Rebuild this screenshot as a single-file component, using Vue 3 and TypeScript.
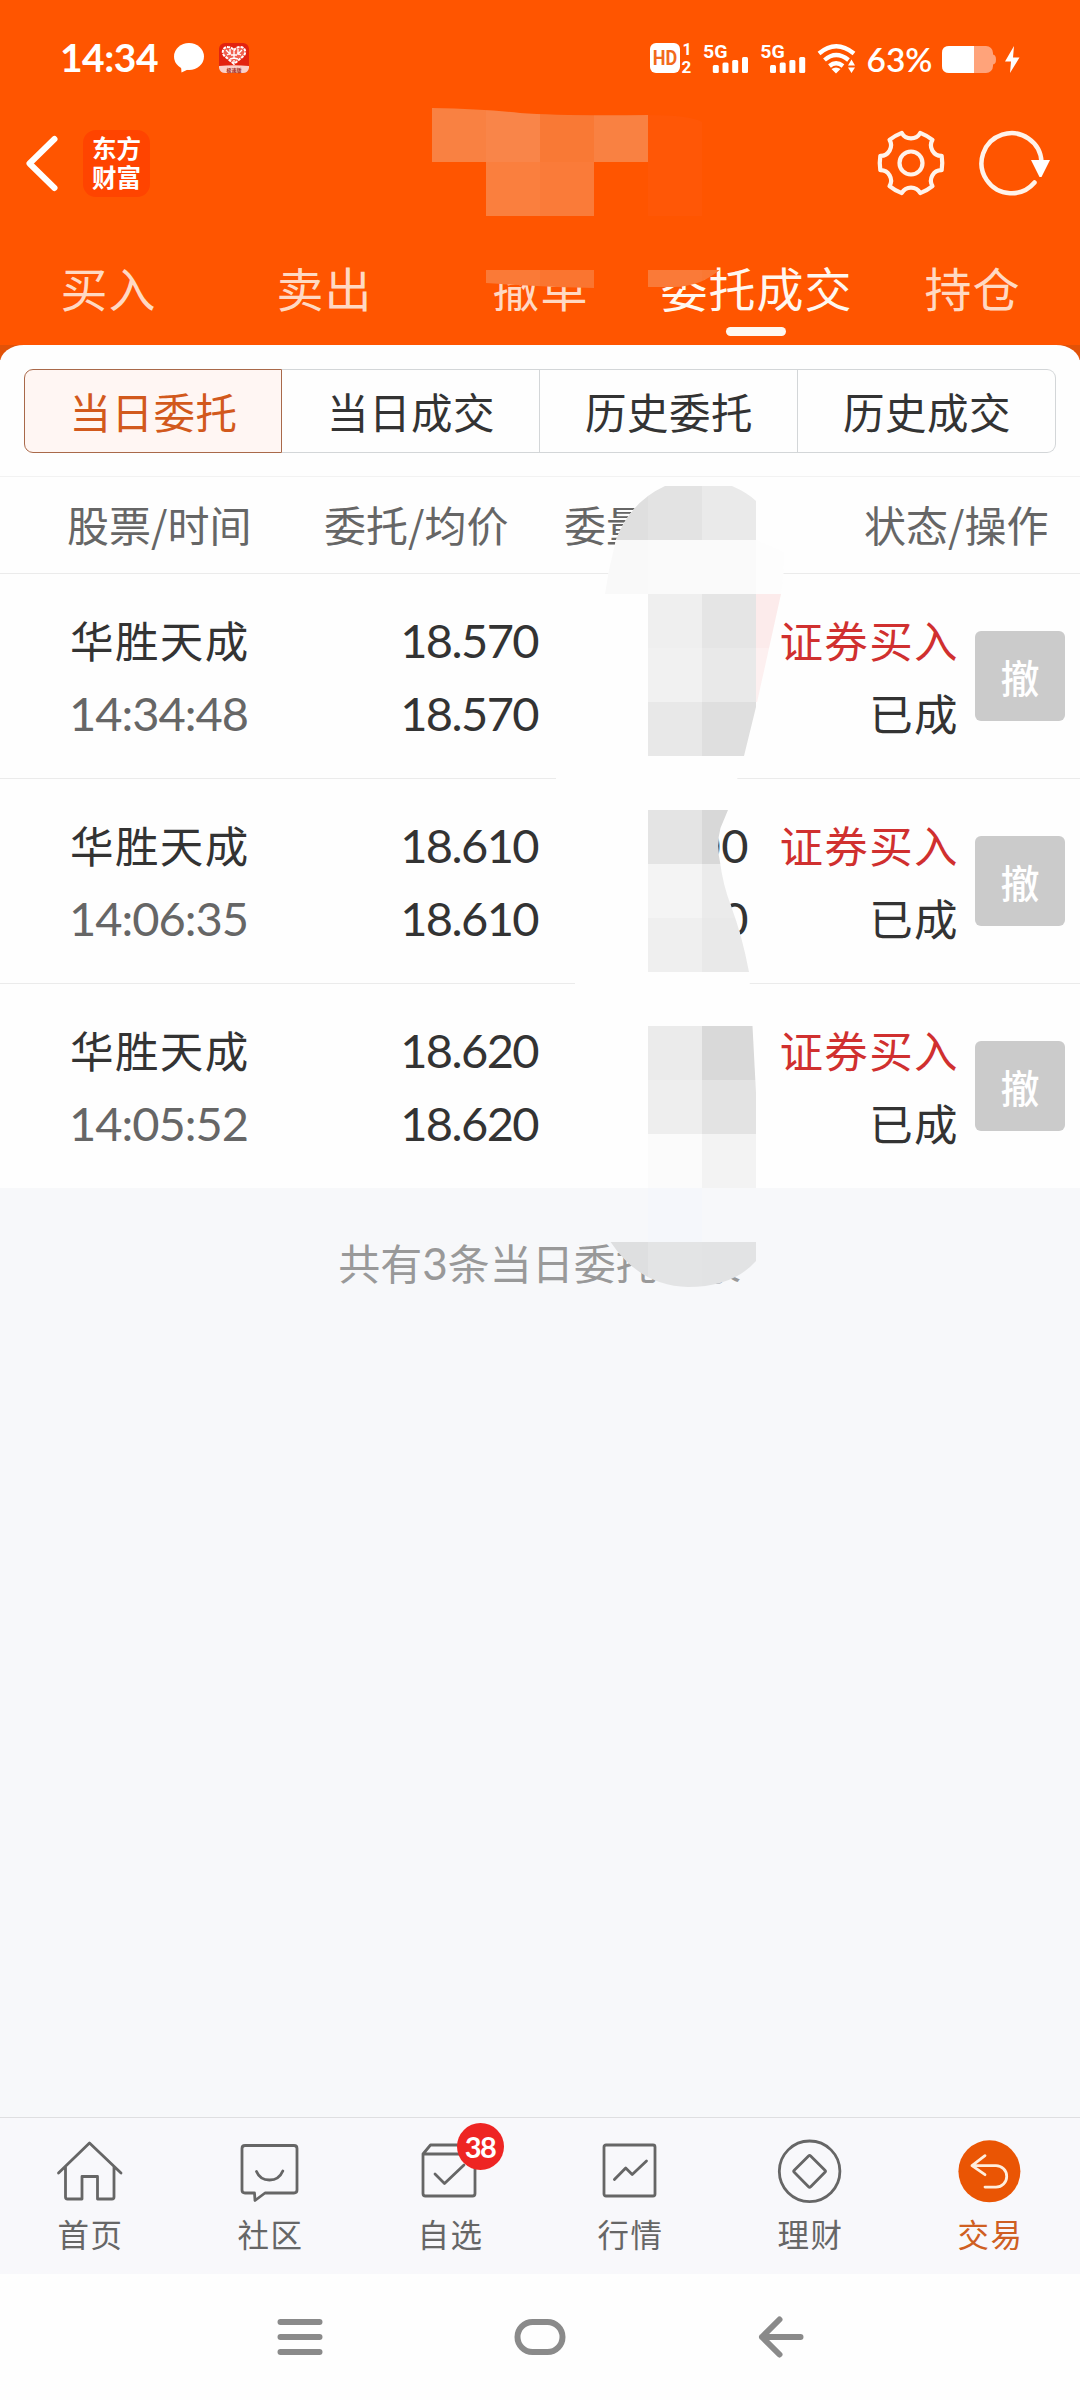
<script setup lang="ts">
interface Order {
  name: string
  time: string
  price: string
  average: string
  quantity: string
  filled: string
}

interface Block {
  x: number
  y: number
  w: number
  h: number
  fill: string
}

const tabs: string[] = ['买入', '卖出', '撤单', '委托成交', '持仓']
const activeTab = 3

const segments: string[] = ['当日委托', '当日成交', '历史委托', '历史成交']
const columns: string[] = ['股票/时间', '委托/均价', '委量/成交', '状态/操作']

const orders: Order[] = [
  { name: '华胜天成', time: '14:34:48', price: '18.570', average: '18.570', quantity: '', filled: '' },
  { name: '华胜天成', time: '14:06:35', price: '18.610', average: '18.610', quantity: '00', filled: '00' },
  { name: '华胜天成', time: '14:05:52', price: '18.620', average: '18.620', quantity: '', filled: '' },
]

// Six-toothed outline for the settings icon
function gearPath(cx: number, cy: number): string {
  const point = (deg: number, r: number): string => {
    const a = (deg * Math.PI) / 180
    return `${(cx + r * Math.cos(a)).toFixed(2)} ${(cy + r * Math.sin(a)).toFixed(2)}`
  }
  let d = `M${point(-13, 31.5)}`
  for (let k = 0; k < 6; k++) {
    const base = k * 60
    d += `Q${point(base, 31.8)} ${point(base + 13, 31.5)}`
    d += `C${point(base + 17, 23.5)} ${point(base + 43, 23.5)} ${point(base + 47, 31.5)}`
  }
  return d + 'Z'
}
const gear = gearPath(35, 35)

const cell = 54
const block = (x: number, y: number, fill: string, w = cell, h = cell): Block => ({ x, y, w, h, fill })

const accountBlocks: Block[] = [
  block(432, 108, '#f98142'),
  block(486, 108, '#f98549'),
  block(540, 108, '#f97935'),
  block(594, 108, '#f98142'),
  block(648, 108, '#ff5706', cell, 108),
  block(486, 162, '#fa7f3e'),
  block(540, 162, '#fa7b39'),
  block(486, 216, '#ff5500', 216),
  block(486, 270, '#fa7a37'),
  block(540, 270, '#fa7530'),
  block(648, 270, '#fa7a38'),
  block(702, 270, '#fa7833'),
]

const quantityBlocks: Block[] = [
  block(594, 486, '#dfdfdf'),
  block(648, 486, '#e3e3e3'),
  block(702, 486, '#eaeaea'),
  block(594, 540, '#f9f9f9'),
  block(648, 540, '#fafafa', 108),
  block(756, 540, '#fdfdfd'),
  block(648, 594, '#efefef'),
  block(702, 594, '#e5e5e5'),
  block(756, 594, '#fcebeb'),
  block(648, 648, '#f1f1f1'),
  block(702, 648, '#e9e9e9'),
  block(756, 648, '#fdf0f0'),
  block(648, 702, '#e8e8e8'),
  block(702, 702, '#dfdfdf'),
  block(648, 810, '#e4e4e4'),
  block(702, 810, '#d8d8d8'),
  block(648, 864, '#f4f4f4'),
  block(702, 864, '#ebebeb'),
  block(648, 918, '#efefef'),
  block(702, 918, '#e9e9e9'),
  block(648, 1026, '#ebebeb'),
  block(702, 1026, '#d9d9d9'),
  block(648, 1080, '#eeeeee'),
  block(702, 1080, '#e3e3e3'),
  block(648, 1134, '#fbfbfb'),
  block(702, 1134, '#f3f3f3'),
  block(540, 1188, '#f7f8fa', 216),
  block(648, 1188, '#f5f7fb'),
  block(594, 1242, '#dedfe0'),
  block(648, 1242, '#e3e4e5'),
  block(702, 1242, '#e2e3e4'),
]
</script>

<template>
  <div class="screen">
    <header class="top">
      <div class="status">
        <div class="status-left">
          <span class="clock">14:34</span>
          <svg class="bubble" width="30" height="30" viewBox="0 0 30 30">
            <ellipse cx="15" cy="13.5" rx="15" ry="13.5" fill="#fff" />
            <path d="M7 23l.5 6.5L17 25z" fill="#fff" />
          </svg>
          <svg class="app" width="30" height="30" viewBox="0 0 30 30">
            <rect width="30" height="30" rx="6" fill="#e3230f" />
            <path d="M15 21L5 12.500C2 8 5 3.500 9 4q4 0 6 3.500Q17 4 21 4c4-.5 7 4 4 8.500z" fill="#f0604f" stroke="#fff" stroke-width="2" stroke-dasharray="3 1" />
            <path d="M7 7l4 4M11 6v6M8 12l4-2M23 7l-4 4M19 6v6M22 12l-4-2M15 9v6M12 12h6M11 16l4-1 4 1M15 17v3" stroke="#fff" stroke-width="1.300" />
            <path d="M0 23q15-1.500 30 0v2q-1 5-6 5H6q-5 0-6-5z" fill="#fbd0c8" />
            <text x="15" y="28.500" text-anchor="middle" font-size="5" font-weight="700" fill="#a02a20" class="cjk">极速版</text>
          </svg>
        </div>
        <div class="status-right">
          <svg width="374" height="34" viewBox="648 41 374 34">
            <rect x="650" y="43" width="30" height="30" rx="6" fill="#fff" />
            <text x="665" y="65" text-anchor="middle" textLength="24.500" lengthAdjust="spacingAndGlyphs" class="mini" font-size="20" fill="#f26a1c">HD</text>
            <text x="687" y="55" text-anchor="middle" class="mini" font-size="16" fill="#fff">1</text>
            <text x="686.500" y="72.500" text-anchor="middle" class="mini" font-size="17" fill="#fff">2</text>
            <g v-for="dx in [0, 57.200]" :key="dx" :transform="`translate(${dx} 0)`" fill="#fff">
              <text x="703" y="57.500" textLength="24.500" lengthAdjust="spacingAndGlyphs" class="mini" font-size="19">5G</text>
              <rect x="712.800" y="65" width="6" height="8" rx="1.500" />
              <rect x="722.500" y="62.500" width="6" height="10.500" rx="1.500" />
              <rect x="732.200" y="60" width="6" height="13" rx="1.500" />
              <rect x="742" y="57" width="6" height="16" rx="1.500" />
            </g>
            <g fill="none" stroke="#fff" stroke-width="4.300">
              <path d="M819 53.500Q836 39 854 53.500" />
              <path d="M824.500 60Q836 50 848.500 60" />
              <path d="M829.500 66Q836 60.500 843 66" />
            </g>
            <path d="M831.500 69q4.500-3 9 0l-4.500 4.500zM848 65.500l3.500-6 3.500 6zM848 67.500l3.500 5.500 3.500-5.500z" fill="#fff" />
            <text x="866.500" y="72.300" textLength="66" lengthAdjust="spacingAndGlyphs" class="percent" fill="#fff">63%</text>
            <rect x="942" y="46" width="51" height="27" rx="7" fill="#ffa37a" />
            <path d="M993 54.500q3 .5 3 5t-3 5z" fill="#ffa37a" />
            <path d="M949 46h25v27h-25q-7 0-7-7V53q0-7 7-7z" fill="#fff" />
            <path d="M1014 46l-9 15.500h6L1010 73l9.500-15.500h-6.500z" fill="#fff" />
          </svg>
        </div>
      </div>

      <div class="titlebar">
        <div class="title-left">
          <svg width="36" height="60" viewBox="0 0 36 60">
            <path d="M31.500 6L6.500 30.500 31.500 55" fill="none" stroke="#fff" stroke-width="6" stroke-linecap="round" stroke-linejoin="round" />
          </svg>
          <div class="logo">东方<br />财富</div>
        </div>
        <div class="title-right">
          <svg width="70" height="70" viewBox="0 0 70 70" fill="none" stroke="#fff3ea" stroke-width="4.200">
            <path :d="gear" stroke-linejoin="round" />
            <circle cx="35" cy="35" r="11.500" />
          </svg>
          <svg width="76" height="70" viewBox="0 0 76 70">
            <path d="M65.500 34A30 30 0 1 0 58.500 54.500" fill="none" stroke="#fff3ea" stroke-width="4.500" stroke-linecap="round" />
            <path d="M55 32h19l-8.500 17h-2z" fill="#fff" />
          </svg>
        </div>
      </div>

      <nav class="tabs">
        <div v-for="(tab, i) in tabs" :key="tab" class="tab" :class="{ active: i === activeTab }">
          <span>{{ tab }}</span>
          <i></i>
        </div>
      </nav>
    </header>

    <main class="panel-wrap">
      <section class="panel">
        <div class="segments">
          <div v-for="(s, i) in segments" :key="s" class="segment" :class="{ on: i === 0 }">{{ s }}</div>
        </div>
        <div class="columns">
          <span v-for="c in columns" :key="c">{{ c }}</span>
        </div>
        <div v-for="o in orders" :key="o.time" class="order">
          <div class="stock">
            <span>{{ o.name }}</span>
            <span class="num time">{{ o.time }}</span>
          </div>
          <div class="price num">
            <span>{{ o.price }}</span>
            <span>{{ o.average }}</span>
          </div>
          <div class="qty num">
            <span>{{ o.quantity }}</span>
            <span>{{ o.filled }}</span>
          </div>
          <div class="state">
            <span class="buy">证券买入</span>
            <span>已成</span>
          </div>
          <button class="cancel">撤</button>
        </div>
      </section>
      <p class="summary">共有<b>3</b>条当日委托记录</p>
    </main>

    <footer class="tabbar">
      <div class="item">
        <svg width="70" height="70" viewBox="0 0 70 70">
          <path d="M3.500 37L34.500 7 66 37M10.500 31v30q0 2 2 2H27V40.500H42.500V63H57q2 0 2-2V31" />
        </svg>
        <span>首页</span>
      </div>
      <div class="item">
        <svg width="70" height="70" viewBox="0 0 70 70">
          <path d="M10 9.500H59q3 0 3 3V54q0 3-3 3H30L20 64.500 19.500 57H10q-3 0-3-3V12.500q0-3 3-3zM21.500 35.500Q25 44 34.500 44T47.800 35" />
        </svg>
        <span>社区</span>
      </div>
      <div class="item">
        <svg width="70" height="70" viewBox="0 0 70 70">
          <path d="M8 18L15.500 9H54L60 18V57.500q0 2.500-2.500 2.500h-47Q8 60 8 57.500zH60M20 38l9.500 9.500L49 29" />
        </svg>
        <em class="badge">38</em>
        <span>自选</span>
      </div>
      <div class="item">
        <svg width="70" height="70" viewBox="0 0 70 70">
          <rect x="9" y="9" width="51" height="51" rx="2" />
          <path d="M19.400 43.500L30.700 32l6.500 6.500L51.500 25" />
        </svg>
        <span>行情</span>
      </div>
      <div class="item">
        <svg width="70" height="70" viewBox="0 0 70 70">
          <circle cx="34.600" cy="35.300" r="30.300" />
          <rect x="23" y="23.700" width="23.200" height="23.200" rx="1.500" transform="rotate(45 34.600 35.300)" />
        </svg>
        <span>理财</span>
      </div>
      <div class="item current">
        <svg width="70" height="70" viewBox="0 0 70 70">
          <circle cx="34.400" cy="35.300" r="31" class="disc" />
          <path d="M30 19.700L17 29.700 30 38.700M17 29.700H41a10.700 10.700 0 0 1 0 21.400H30" />
        </svg>
        <span>交易</span>
      </div>
    </footer>

    <div class="sysnav">
      <svg width="48" height="42" viewBox="0 0 48 42"><path d="M4.500 6h39M4.500 21h39M4.500 36h39" /></svg>
      <svg width="54" height="42" viewBox="0 0 54 42"><rect x="4.500" y="6" width="45" height="30" rx="15" /></svg>
      <svg width="48" height="42" viewBox="0 0 48 42"><path d="M23.500 3.500L6 21 23.500 38.500M6 21h38.500" /></svg>
    </div>

    <!-- Privacy mosaic over the account name and the quantities -->
    <svg class="mosaic" width="1080" height="2400" viewBox="0 0 1080 2400">
      <defs>
        <clipPath id="account">
          <path d="M432 108Q486 109 520 113Q560 116 648 115Q690 115 702 122V268H722Q700 288 670 287H594V288Q540 287 486 283V216H432z" />
        </clipPath>
        <clipPath id="quantity">
          <path d="M665 486H732Q748 493 756 501V540L784 552Q784 575 781 594L756 707L744 756L728 810L720.500 828Q716 845 720 862Q723 885 731 906Q742 935 749 972L752.500 1026L756 1093V1261Q733 1287 688 1287Q640 1286 610.600 1242L594 1160L582 1080L575 983L560 900L553 830L556 778L580 690L605 594L609 570L616 540Q630 502 665 486z" />
        </clipPath>
      </defs>
      <g clip-path="url(#account)" shape-rendering="crispEdges">
        <rect v-for="(b, i) in accountBlocks" :key="i" :x="b.x" :y="b.y" :width="b.w" :height="b.h" :fill="b.fill" />
      </g>
      <g clip-path="url(#quantity)" shape-rendering="crispEdges">
        <rect x="540" y="486" width="260" height="702" fill="#fefefe" />
        <rect v-for="(b, i) in quantityBlocks" :key="i" :x="b.x" :y="b.y" :width="b.w" :height="b.h" :fill="b.fill" />
      </g>
    </svg>
  </div>
</template>

<style>
body {
  margin: 0;
}
</style>

<style scoped>
.screen {
  position: relative;
  width: 1080px;
  height: 2400px;
  display: flex;
  flex-direction: column;
  overflow: hidden;
  background: #f7f8fa;
  color: #333;
  font-family: 'Noto Sans CJK SC', 'Noto Sans', sans-serif;
}
.cjk {
  font-family: 'Noto Sans CJK SC', sans-serif;
}
.num,
.summary b,
.badge,
.clock,
.percent {
  font-family: Lato, 'Noto Sans CJK SC', sans-serif;
}
.mini {
  font-family: Roboto, sans-serif;
  font-weight: 700;
}
.percent {
  font-size: 32px;
  font-weight: 600;
}
.top {
  height: 345px;
  box-sizing: border-box;
  background: #ff5500;
  display: flex;
  flex-direction: column;
}
.status {
  height: 75px;
  padding: 41px 58px 0 60px;
  box-sizing: border-box;
  display: flex;
  justify-content: space-between;
  flex: none;
}
.status-left {
  display: flex;
  align-items: flex-start;
  padding-top: 2px;
}
.clock {
  width: 99px;
  line-height: 29px;
  font-size: 39px;
  font-weight: 700;
  color: #fff;
  letter-spacing: -0.5px;
}
.bubble {
  margin: 0 15px;
}
.app {
  overflow: visible;
}
.status-right svg {
  display: block;
  overflow: visible;
}
.titlebar {
  height: 176px;
  padding: 0 28px 0 23px;
  display: flex;
  justify-content: space-between;
  align-items: center;
  flex: none;
}
.title-left,
.title-right {
  display: flex;
  align-items: center;
}
.title-right {
  gap: 30px;
}
.title-left {
  gap: 24px;
}
.logo {
  width: 67px;
  height: 65px;
  padding-bottom: 2px;
  border-radius: 13px;
  background: #ff4400;
  display: grid;
  place-content: center;
  color: #fff;
  font-size: 24.5px;
  font-weight: 700;
  line-height: 29px;
}
.tabs {
  flex: 1;
  display: grid;
  grid-template-columns: repeat(5, 216px);
}
.tab {
  display: flex;
  flex-direction: column;
  align-items: center;
  padding-top: 6px;
  font-size: 47px;
  letter-spacing: 1px;
  line-height: 60px;
  color: #ffd9c3;
  white-space: nowrap;
}
.tab span {
  padding-left: 1px;
}
.tab i {
  width: 60px;
  height: 9px;
  margin-top: 10px;
  border-radius: 4.5px;
}
.tab.active {
  color: #fff8f0;
}
.tab.active i {
  background: #fff8f0;
}
.panel-wrap {
  height: 1772px;
  flex: none;
  background: linear-gradient(#e25208 0 15px, #f7f8fa 15px);
}
.panel {
  height: 843px;
  background: #fefefe;
  border-radius: 24px 24px 0 0 / 18px 18px 0 0;
  overflow: hidden;
}
.segments {
  height: 84px;
  margin: 24px 24px 23px;
  display: grid;
  grid-template-columns: repeat(4, 258px);
}
.segment {
  box-sizing: border-box;
  border: 1px solid #d3d6d8;
  border-left-width: 0;
  padding-left: 1px;
  display: flex;
  align-items: center;
  justify-content: center;
  font-size: 41.5px;
  letter-spacing: 0.5px;
  line-height: 60px;
}
.segment:last-child {
  border-radius: 0 9px 9px 0;
}
.segment.on {
  border: 1px solid #a9694a;
  border-radius: 9px 0 0 9px;
  background: #fff6f3;
  color: #d2591c;
}
.columns {
  height: 98px;
  box-sizing: border-box;
  border-top: 1px solid #f2f2f2;
  border-bottom: 1px solid #ebebeb;
  padding: 0 31px 3px 67px;
  display: grid;
  grid-template-columns: 257px 240px 300px 185px;
  align-items: center;
  font-size: 42px;
  color: #666;
  white-space: nowrap;
}
.order {
  height: 205px;
  box-sizing: border-box;
  border-bottom: 1px solid #ebebeb;
  padding: 29px 15px 0 70px;
  display: grid;
  grid-template-columns: 228px 240px 211px 209px 90px;
  font-size: 43.5px;
  letter-spacing: 1.4px;
  line-height: 73px;
}
.order:last-child {
  border-bottom: 0;
}
.stock,
.price,
.qty,
.state {
  display: flex;
  flex-direction: column;
}
.num {
  font-size: 47px;
}
.price,
.qty,
.state {
  align-items: flex-end;
}
.price,
.qty {
  padding-top: 1px;
}
.price {
  letter-spacing: -1.6px;
}
.qty {
  letter-spacing: 0.5px;
}
.price span,
.qty span {
  height: 73px;
}
.time {
  padding-top: 1px;
  margin-left: -1px;
  color: #666;
  letter-spacing: -1px;
}
.state {
  margin-right: -1px;
}
.buy {
  color: #d0302f;
}
.cancel {
  width: 90px;
  height: 90px;
  margin: 28px 0 0 17px;
  padding: 0;
  border: 0;
  border-radius: 6px;
  background: #cbcbcb;
  color: #fff;
  font: 500 39px/89px 'Noto Sans CJK SC', sans-serif;
}
.summary {
  margin: 43px 0 0;
  text-align: center;
  font-size: 42px;
  line-height: 62px;
  color: #999;
}
.summary b {
  font-weight: 400;
  font-size: 44px;
}
.tabbar {
  height: 157px;
  flex: none;
  box-sizing: border-box;
  border-top: 1px solid #dfdfe1;
  background: #f8f8fb;
  display: grid;
  grid-template-columns: repeat(6, 180px);
}
.item {
  position: relative;
  display: flex;
  flex-direction: column;
  align-items: center;
  padding-top: 18px;
  font-size: 31.5px;
  line-height: 40px;
  letter-spacing: 1.5px;
  color: #666;
}
.item span {
  padding-left: 1px;
}
.item svg {
  fill: none;
  stroke: #666;
  stroke-width: 2.8;
  stroke-linecap: round;
  stroke-linejoin: round;
  margin-bottom: 7px;
}
.item.current {
  color: #cf5f22;
}
.item.current svg {
  stroke: #ffeedd;
}
.item .disc {
  fill: #ea5504;
  stroke: none;
}
.badge {
  position: absolute;
  left: 96.5px;
  top: 4.5px;
  width: 47px;
  height: 47px;
  border-radius: 50%;
  background: #ee2523;
  color: #fff;
  text-align: center;
  font-style: normal;
  font-size: 29px;
  font-weight: 700;
  line-height: 47px;
  letter-spacing: -1.5px;
}
.sysnav {
  flex: 1;
  background: #fefefe;
  display: flex;
  justify-content: center;
  align-items: center;
  gap: 189px;
}
.sysnav svg {
  fill: none;
  stroke: #8a8a8a;
  stroke-width: 6;
  stroke-linecap: round;
  stroke-linejoin: round;
}
.mosaic {
  position: absolute;
  inset: 0;
}
</style>
